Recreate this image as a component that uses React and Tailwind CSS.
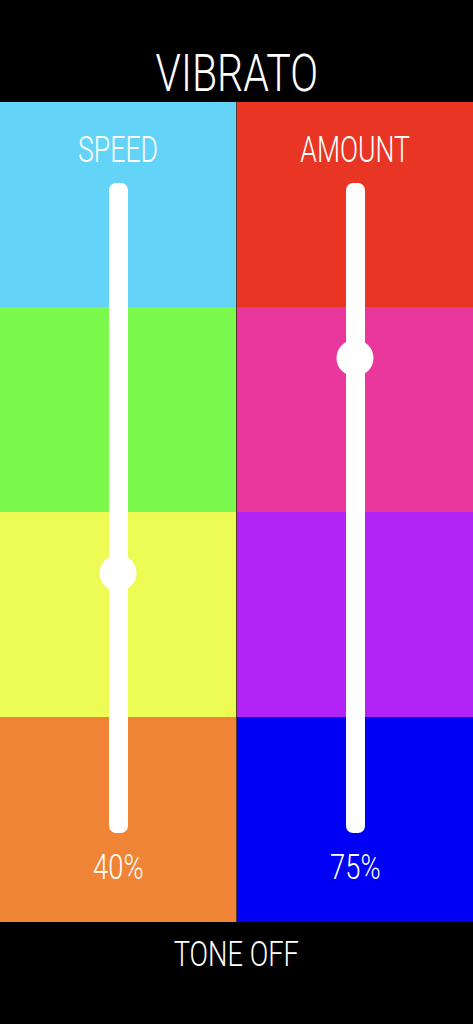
import React from "react";

const FONT = "font-['Roboto',sans-serif]";

const columns = [
  {
    label: "SPEED",
    value: 40,
    thumbCenter: 390,
    cells: ["bg-[#63d4f7]", "bg-[#7bf94c]", "bg-[#edfc55]", "bg-[#ef8336]"],
  },
  {
    label: "AMOUNT",
    value: 75,
    thumbCenter: 175,
    cells: ["bg-[#e83524]", "bg-[#e9379d]", "bg-[#b124f5]", "bg-[#0000f5]"],
  },
];

const VerticalSlider = ({ thumbCenter }) => (
  <div className="relative mt-[15px] w-[19px] h-[650px] rounded-[7px] bg-white">
    <div
      className="absolute left-1/2 -translate-x-1/2 w-[37px] h-[36px] rounded-full bg-white"
      style={{ top: thumbCenter - 18 }}
    />
  </div>
);

const Column = ({ label, value, thumbCenter, cells }) => (
  <div className="relative h-[820px]">
    <div className="flex flex-col h-full">
      {cells.map((c, i) => (
        <div key={i} className={`${c} h-[205px]`} />
      ))}
    </div>
    <div className="absolute inset-0 flex flex-col items-center pt-[30px]">
      <div className={`${FONT} font-light text-white text-[36px] leading-none h-[36px] scale-x-[0.74]`}>
        {label}
      </div>
      <VerticalSlider thumbCenter={thumbCenter} />
      <div className={`${FONT} font-light text-white text-[35px] leading-none mt-[17px] scale-x-[0.78]`}>
        {value}%
      </div>
    </div>
  </div>
);

export default function App() {
  return (
    <div className="w-full h-[1024px] bg-black flex flex-col overflow-hidden">
      <div className="h-[102px] flex justify-center pt-[48px]">
        <div className={`${FONT} font-light text-white text-[52px] leading-none scale-x-[0.79]`}>
          VIBRATO
        </div>
      </div>
      <div className="grid grid-cols-[236px_1fr] gap-px bg-[#5a3a30]">
        {columns.map((col) => (
          <Column key={col.label} {...col} />
        ))}
      </div>
      <div className="flex-1 flex justify-center pt-[15px]">
        <div className={`${FONT} font-light text-white text-[35px] leading-none scale-x-[0.78]`}>
          TONE OFF
        </div>
      </div>
    </div>
  );
}
